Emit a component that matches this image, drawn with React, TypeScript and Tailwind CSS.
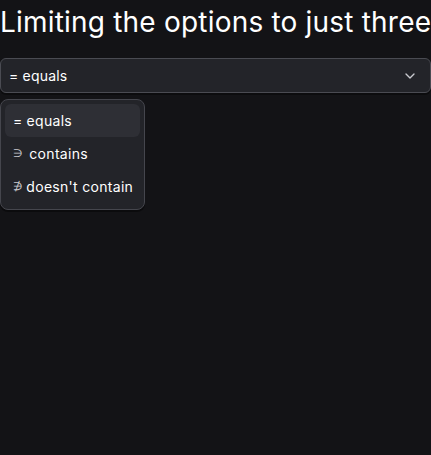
import { ChevronDown } from "lucide-react";

const options = [
  { symbol: "=", label: "equals", gap: "gap-[4px]" },
  { symbol: "∋", label: "contains", gap: "gap-[6px]" },
  { symbol: "∌", label: "doesn't contain", gap: "gap-[3px]" },
];

export default function App() {
  return (
    <div
      className="min-h-screen bg-[#131316] text-white"
      style={{ fontFamily: "Inter, 'Noto Sans', sans-serif" }}
    >
      <h1 className="text-[28px] leading-[44px] font-normal tracking-[0.2px] whitespace-nowrap">
        Limiting the options to just three
      </h1>
      <div className="relative mt-[14px]">
        <button className="flex h-[35px] w-full items-center justify-between rounded-md border border-[#4a4b52] bg-[#232429] pr-[12px] pl-[8px] text-[14px] tracking-[0.2px] shadow-[0_2px_0_rgba(0,0,0,0.35)]">
          <span>= equals</span>
          <ChevronDown className="h-4 w-4 text-[#c9cad0]" strokeWidth={2} />
        </button>
        <div className="absolute top-[41px] left-0 flex w-[145px] flex-col rounded-lg border border-[#45464d] bg-[#232429] px-[4px] pt-[4px] pb-[6px] shadow-[0_2px_0_rgba(0,0,0,0.4)]">
          {options.map((o, i) => (
            <div
              key={o.label}
              className={`flex h-[33px] items-center rounded-md px-[8px] text-[14px] tracking-[0.3px] whitespace-nowrap ${o.gap} ${
                i === 0 ? "bg-[#2e2f35]" : ""
              }`}
            >
              <span className={i === 0 ? "" : "text-[11px] text-[#c9cad0]"}>{o.symbol}</span>
              <span>{o.label}</span>
            </div>
          ))}
        </div>
      </div>
    </div>
  );
}
